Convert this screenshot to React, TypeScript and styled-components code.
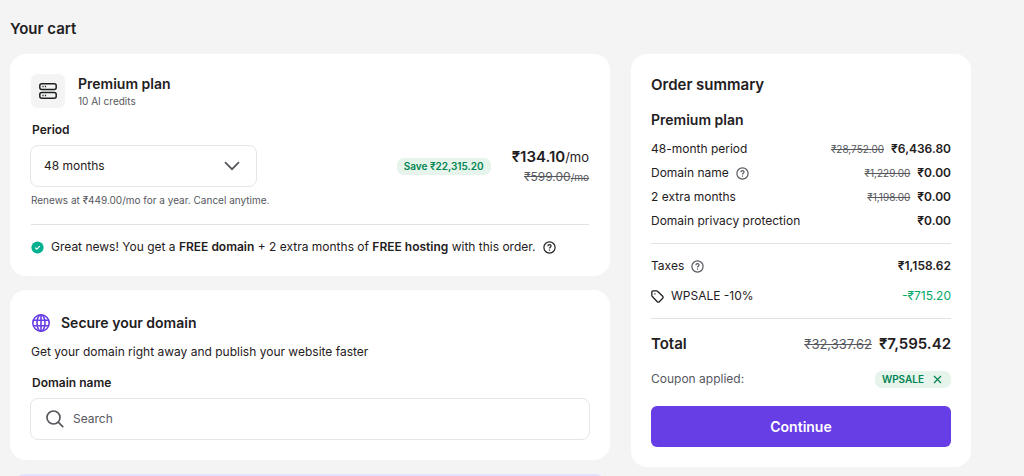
import React from "react";
import styled, { createGlobalStyle, css } from "styled-components";

const ink = "#1f2022";
const muted = "#56585e";
const line = "#e2e2e5";
const violet = "#673de6";
const green = "#008552";
const mint = "#e6f4ec";

const GlobalStyle = createGlobalStyle`
  * { box-sizing: border-box; }
  html { scrollbar-width: none; }
  body {
    margin: 0;
    background: #f4f4f4;
    color: ${ink};
    font-family: Inter, "Liberation Sans", sans-serif;
    font-size: 12px;
    line-height: 20px;
    -webkit-font-smoothing: antialiased;
  }
  h1, h2, h3, p, dl, dt, dd { margin: 0; }
  button, input, select { font: inherit; color: inherit; }
`;

const Page = styled.main`
  max-width: 1080px;
  padding: 19px 53px 0 10px;
`;

const PageTitle = styled.h1`
  font-size: 15px;
  line-height: 20px;
  font-weight: 600;
  margin-bottom: 15px;
`;

const Columns = styled.div`
  display: grid;
  grid-template-columns: minmax(0, 600fr) minmax(0, 340fr);
  gap: 21px;
  align-items: start;
`;

const Stack = styled.div`
  display: flex;
  flex-direction: column;
  gap: 14px;
`;

const Card = styled.section<{ $side?: number }>`
  background: #fff;
  border-radius: 16px;
  padding: 20px ${(p) => p.$side ?? 20}px;
`;

const Banner = styled.div`
  height: 40px;
  border-radius: 16px;
  background: #e3e1fd;
`;

const PlanHeader = styled.header`
  display: flex;
  gap: 13px;
`;

const IconTile = styled.span`
  display: grid;
  place-items: center;
  width: 34px;
  height: 34px;
  border-radius: 6px;
  background: #f4f4f5;
`;

const PlanName = styled.h2`
  font-size: 14px;
  line-height: 20px;
  font-weight: 600;
`;

const PlanNote = styled.p`
  font-size: 10px;
  line-height: 14px;
  color: ${muted};
`;

const FieldLabel = styled.label<{ $top: number }>`
  display: block;
  margin: ${(p) => p.$top}px 0 5px 1px;
  font-weight: 600;
`;

const PeriodRow = styled.div`
  display: flex;
  align-items: center;
  gap: 21px;
  height: 42px;
`;

const SelectBox = styled.div`
  position: relative;
  width: 227px;
  margin: 0 auto 0 -1px;
  svg {
    position: absolute;
    right: 17px;
    top: 16px;
    pointer-events: none;
  }
`;

const field = css`
  height: 42px;
  border: 1px solid #e6e6e9;
  border-radius: 8px;
  background: #fff;
`;

const Select = styled.select`
  ${field}
  width: 100%;
  appearance: none;
  padding: 0 40px 0 13px;
`;

const Badge = styled.span`
  padding: 0 7px;
  border-radius: 7px;
  background: ${mint};
  color: ${green};
  font-size: 10px;
  line-height: 17px;
  font-weight: 600;
`;

const CouponBadge = styled(Badge)`
  display: inline-flex;
  align-items: center;
  gap: 9px;
  padding-right: 9px;
`;

const Prices = styled.div`
  padding-top: 2px;
  text-align: right;
  p { font-size: 13px; }
`;

const PriceNow = styled.strong`
  font-size: 15px;
  font-weight: 600;
`;

const OldPrice = styled.s<{ $size?: number }>`
  color: ${muted};
  font-size: ${(p) => p.$size ?? 10}px;
  font-weight: 400;
  small { font-size: 10px; }
`;

const Hint = styled.p`
  margin-top: 5px;
  font-size: 10px;
  line-height: 16px;
  color: ${muted};
`;

const Divider = styled.hr<{ $top: number; $bottom: number }>`
  height: 1px;
  border: 0;
  background: ${line};
  margin: ${(p) => p.$top}px 0 ${(p) => p.$bottom}px;
`;

const News = styled.p`
  display: flex;
  align-items: center;
  gap: 7px;
  margin-bottom: -1px;
  b { font-weight: 600; }
`;

const IconButton = styled.button<{ $color?: string }>`
  display: inline-flex;
  padding: 0;
  border: 0;
  background: none;
  color: ${(p) => p.$color ?? "inherit"};
  cursor: pointer;
`;

const DomainHeader = styled.header`
  display: flex;
  align-items: center;
  gap: 11px;
  height: 26px;
  padding-left: 1px;
  margin-bottom: 6px;
`;

const SearchBox = styled.div`
  ${field}
  display: flex;
  align-items: center;
  gap: 9px;
  margin: 0 -1px;
  padding: 0 15px;
  color: ${muted};
`;

const SearchInput = styled.input`
  flex: 1;
  min-width: 0;
  border: 0;
  outline: 0;
  padding: 0;
  background: none;
  &::placeholder { color: ${muted}; opacity: 1; }
`;

const SummaryTitle = styled.h2`
  font-size: 15px;
  line-height: 22px;
  font-weight: 600;
  margin-bottom: 14px;
`;

const SummaryPlan = styled.h3`
  font-size: 14px;
  line-height: 20px;
  font-weight: 600;
  margin-bottom: 7px;
`;

const Lines = styled.dl<{ $gap?: number }>`
  display: flex;
  flex-direction: column;
  gap: ${(p) => p.$gap ?? 0}px;
`;

const Line = styled.div<{ $large?: boolean }>`
  display: flex;
  justify-content: space-between;
  line-height: 24px;
  dt, dd { display: flex; align-items: center; gap: 7px; }
  dd { font-weight: 600; }
  ${(p) => p.$large && css`
    font-size: 15px;
    dt { font-weight: 600; }
  `}
`;

const Discount = styled.span`
  color: #00a866;
  font-weight: 400;
`;

const CouponRow = styled.div`
  display: flex;
  justify-content: space-between;
  align-items: center;
  margin: 13px 0 17px;
  color: ${muted};
`;

const Continue = styled.button`
  display: block;
  width: 100%;
  height: 41px;
  border: 0;
  border-radius: 6px;
  background: ${violet};
  color: #fff;
  font-size: 14px;
  font-weight: 600;
  cursor: pointer;
`;

const ServerIcon = () => (
  <svg width="18" height="16" viewBox="0 0 18 16" fill="none" stroke="currentColor" strokeWidth="1.5" aria-hidden="true">
    <rect x="0.8" y="0.8" width="16.4" height="5.6" rx="2" />
    <rect x="0.8" y="9.6" width="16.4" height="5.6" rx="2" />
    <path d="M3.4 3.6h1.200M5.900 3.600h1.200M3.400 12.400h1.200M5.900 12.400h1.200" />
  </svg>
);

const ChevronIcon = () => (
  <svg width="16" height="10" viewBox="0 0 16 10" fill="none" stroke={muted} strokeWidth="1.7" aria-hidden="true">
    <path d="M1 1.2 8 8.2l7-7" />
  </svg>
);

const CheckIcon = () => (
  <svg width="13" height="13" viewBox="0 0 13 13" aria-hidden="true">
    <circle cx="6.5" cy="6.5" r="6.1" fill="#00b090" />
    <path d="m4.2 6.6 1.600 1.600 3-3.100" fill="none" stroke="#fff" strokeWidth="1.2" />
  </svg>
);

const HelpIcon = () => (
  <svg width="13" height="13" viewBox="0 0 13 13" fill="none" stroke="currentColor" strokeWidth="1.2" aria-hidden="true">
    <circle cx="6.5" cy="6.5" r="5.6" />
    <path d="M4.900 5.200c0-.9.7-1.500 1.600-1.500s1.600.6 1.600 1.400c0 1.100-1.600 1.200-1.600 2.300" />
    <path d="M6.500 8.500v1.200" />
  </svg>
);

const GlobeIcon = () => (
  <svg width="18" height="18" viewBox="0 0 18 18" fill="none" stroke={violet} strokeWidth="1.6" aria-hidden="true">
    <circle cx="9" cy="9" r="8.2" />
    <ellipse cx="9" cy="9" rx="4" ry="8.2" />
    <path d="M9 .8v16.400M1.500 6.200h15M1.500 11.800h15" />
  </svg>
);

const SearchIcon = () => (
  <svg width="18" height="18" viewBox="0 0 18 18" fill="none" stroke="currentColor" strokeWidth="1.700" aria-hidden="true">
    <circle cx="7.5" cy="7.5" r="6.500" />
    <path d="m12.200 12.200 5 5" />
  </svg>
);

const TagIcon = () => (
  <svg width="13" height="13" viewBox="0 0 13 13" fill="none" stroke="currentColor" strokeWidth="1.300" strokeLinejoin="round" aria-hidden="true">
    <path d="M.8 2.300A1.500 1.500 0 0 1 2.300.8h3.100a1.500 1.500 0 0 1 1.100.5l5.200 5a1.400 1.400 0 0 1 0 2l-3.400 3.400a1.400 1.400 0 0 1-2 0l-5-5.200A1.500 1.500 0 0 1 .8 5.400z" />
    <circle cx="3.900" cy="3.900" r=".7" fill="currentColor" stroke="none" />
  </svg>
);

const CloseIcon = () => (
  <svg width="9" height="9" viewBox="0 0 9 9" fill="none" stroke="currentColor" strokeWidth="1.2" aria-hidden="true">
    <path d="m1 1 7 7M8 1 1 8" />
  </svg>
);

const Help = ({ about, color }: { about: string; color?: string }) => (
  <IconButton type="button" aria-label={about} $color={color}>
    <HelpIcon />
  </IconButton>
);

const items = [
  { name: "48-month period", old: "₹28,752.00", price: "₹6,436.80" },
  { name: "Domain name", help: true, old: "₹1,229.00", price: "₹0.00" },
  { name: "2 extra months", old: "₹1,198.00", price: "₹0.00" },
  { name: "Domain privacy protection", price: "₹0.00" },
];

export default function App() {
  return (
    <>
      <GlobalStyle />
      <Page>
        <PageTitle>Your cart</PageTitle>
        <Columns>
          <Stack>
            <Card $side={21}>
              <PlanHeader>
                <IconTile><ServerIcon /></IconTile>
                <div>
                  <PlanName>Premium plan</PlanName>
                  <PlanNote>10 AI credits</PlanNote>
                </div>
              </PlanHeader>
              <FieldLabel htmlFor="period" $top={12}>Period</FieldLabel>
              <PeriodRow>
                <SelectBox>
                  <Select id="period" defaultValue="48">
                    <option value="48">48 months</option>
                  </Select>
                  <ChevronIcon />
                </SelectBox>
                <Badge>Save ₹22,315.20</Badge>
                <Prices>
                  <p><PriceNow>₹134.10</PriceNow>/mo</p>
                  <OldPrice $size={12}>₹599.00<small>/mo</small></OldPrice>
                </Prices>
              </PeriodRow>
              <Hint>Renews at ₹449.00/mo for a year. Cancel anytime.</Hint>
              <Divider $top={16} $bottom={12} />
              <News>
                <CheckIcon />
                <span>
                  Great news! You get a <b>FREE domain</b> + 2 extra months of <b>FREE hosting</b> with this order.
                </span>
                <Help about="About the free offer" />
              </News>
            </Card>
            <Card $side={21}>
              <DomainHeader>
                <GlobeIcon />
                <PlanName>Secure your domain</PlanName>
              </DomainHeader>
              <p>Get your domain right away and publish your website faster</p>
              <FieldLabel htmlFor="domain" $top={11}>Domain name</FieldLabel>
              <SearchBox>
                <SearchIcon />
                <SearchInput id="domain" type="text" placeholder="Search" />
              </SearchBox>
            </Card>
            <Banner />
          </Stack>
          <Card as="aside">
            <SummaryTitle>Order summary</SummaryTitle>
            <SummaryPlan>Premium plan</SummaryPlan>
            <Lines>
              {items.map((item) => (
                <Line key={item.name}>
                  <dt>
                    {item.name}
                    {item.help && <Help about="About the domain name" color={muted} />}
                  </dt>
                  <dd>
                    {item.old && <OldPrice>{item.old}</OldPrice>}
                    {item.price}
                  </dd>
                </Line>
              ))}
            </Lines>
            <Divider $top={10} $bottom={10} />
            <Lines $gap={6}>
              <Line>
                <dt>Taxes <Help about="About taxes" color={muted} /></dt>
                <dd>₹1,158.62</dd>
              </Line>
              <Line>
                <dt><TagIcon /> WPSALE -10%</dt>
                <dd><Discount>-₹715.20</Discount></dd>
              </Line>
            </Lines>
            <Divider $top={10} $bottom={13} />
            <Lines>
              <Line $large>
                <dt>Total</dt>
                <dd><OldPrice $size={13}>₹32,337.62</OldPrice> ₹7,595.42</dd>
              </Line>
            </Lines>
            <CouponRow>
              Coupon applied:
              <CouponBadge>
                WPSALE
                <IconButton type="button" aria-label="Remove coupon"><CloseIcon /></IconButton>
              </CouponBadge>
            </CouponRow>
            <Continue type="button">Continue</Continue>
          </Card>
        </Columns>
      </Page>
    </>
  );
}
